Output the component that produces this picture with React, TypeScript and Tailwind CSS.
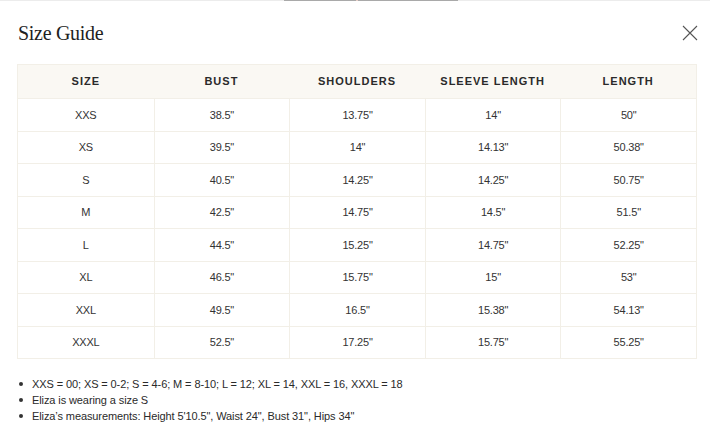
const headers = ["SIZE", "BUST", "SHOULDERS", "SLEEVE LENGTH", "LENGTH"];

const rows = [
  ["XXS", "38.5\"", "13.75\"", "14\"", "50\""],
  ["XS", "39.5\"", "14\"", "14.13\"", "50.38\""],
  ["S", "40.5\"", "14.25\"", "14.25\"", "50.75\""],
  ["M", "42.5\"", "14.75\"", "14.5\"", "51.5\""],
  ["L", "44.5\"", "15.25\"", "14.75\"", "52.25\""],
  ["XL", "46.5\"", "15.75\"", "15\"", "53\""],
  ["XXL", "49.5\"", "16.5\"", "15.38\"", "54.13\""],
  ["XXXL", "52.5\"", "17.25\"", "15.75\"", "55.25\""],
];

const notes = [
  "XXS = 00; XS = 0-2; S = 4-6; M = 8-10; L = 12; XL = 14, XXL = 16, XXXL = 18",
  "Eliza is wearing a size S",
  "Eliza’s measurements: Height 5'10.5\", Waist 24\", Bust 31\", Hips 34\"",
];

export default function App() {
  return (
    <div className="relative h-[442px] w-[710px] overflow-hidden bg-white font-['Liberation_Sans',Arial,sans-serif] text-[#222]">
      <div className="flex h-px w-full bg-[#ececec]">
        <div className="ml-[284px] h-px w-[72px] bg-[#a9a9a9]" />
        <div className="h-px w-[2px] bg-[#e8cfc8]" />
        <div className="h-px w-[100px] bg-[#a9a9a9]" />
      </div>

      <div className="flex items-center justify-between pl-[18px] pr-[12px] pt-[19px]">
        <h2 className="font-['Liberation_Serif','Times_New_Roman',serif] text-[20px] leading-[26px] tracking-[-0.3px] text-[#1f1f1f]">
          Size Guide
        </h2>
        <button className="text-[#555]" aria-label="Close">
          <svg width="16" height="16" viewBox="0 0 16 16" fill="none" stroke="currentColor" strokeWidth="1.1">
            <path d="M1 1L15 15M15 1L1 15" />
          </svg>
        </button>
      </div>

      <div className="ml-[17px] mt-[18px] w-[680px] border border-[#f2efe7]">
        <div className="grid h-[33px] grid-cols-5 bg-[#faf8f3]">
          {headers.map((h) => (
            <div
              key={h}
              className="flex items-center justify-center text-[11px] font-bold tracking-[0.09em] text-[#2a2a2a]"
            >
              {h}
            </div>
          ))}
        </div>
        {rows.map((r, i) => (
          <div key={i} className="grid h-[32.5px] grid-cols-5 border-t border-[#f2efe7]">
            {r.map((c, j) => (
              <div
                key={j}
                className={`flex items-center justify-center text-[11px] tracking-[-0.2px] text-[#333] ${j > 0 ? "border-l border-[#f2efe7]" : ""}`}
              >
                {c}
              </div>
            ))}
          </div>
        ))}
      </div>

      <ul className="ml-[19px] mt-[17px] text-[11px] leading-[16px] tracking-[-0.1px] text-[#2a2a2a]">
        {notes.map((n) => (
          <li key={n} className="flex items-center">
            <span className="mr-[9px] h-[4px] w-[4px] rounded-full bg-[#333]" />
            {n}
          </li>
        ))}
      </ul>
    </div>
  );
}
